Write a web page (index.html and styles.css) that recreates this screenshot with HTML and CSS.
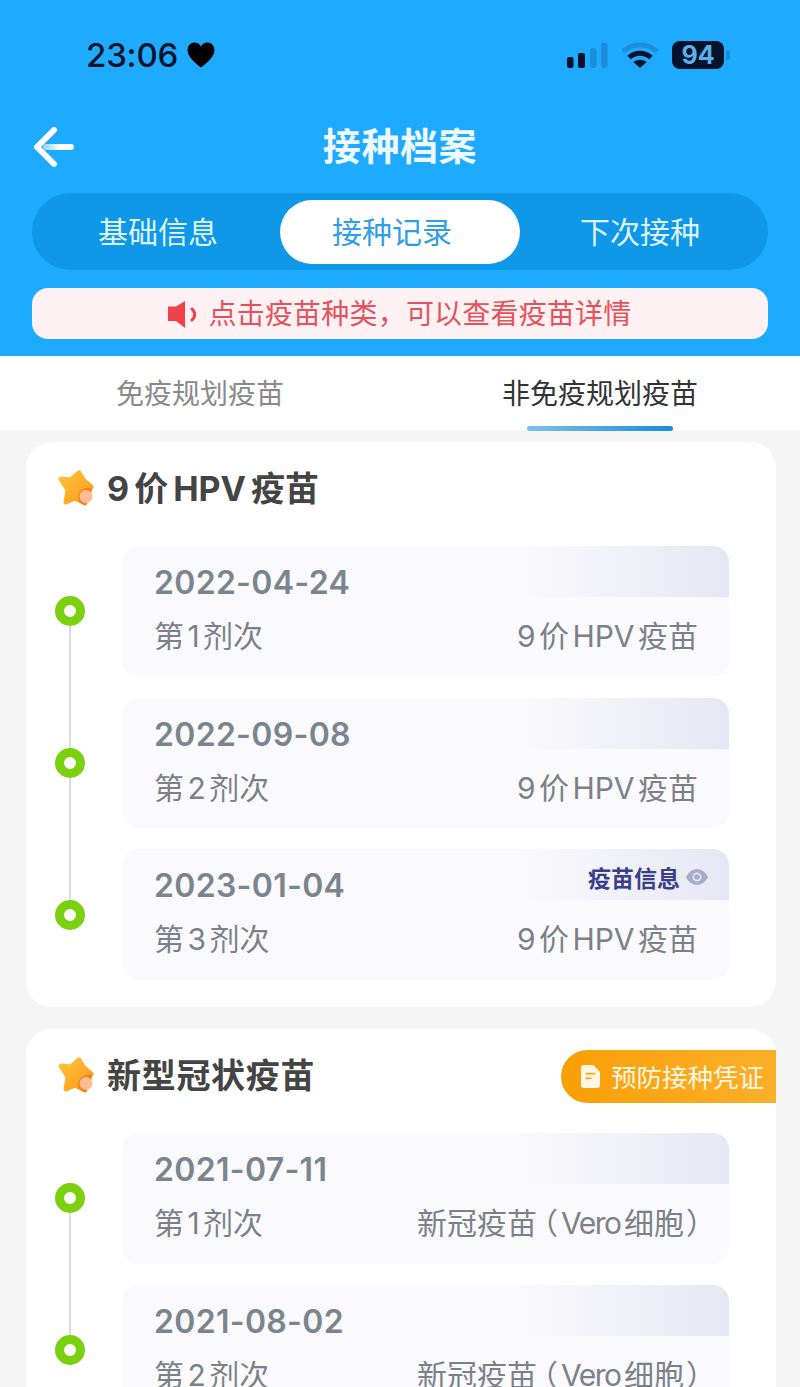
FILE: index.html
```html
<!DOCTYPE html>
<html lang="zh-CN">
<head>
<meta charset="utf-8">
<title>接种档案</title>
<link rel="stylesheet" href="styles.css">
</head>
<body>
<div class="page">
  <header class="header">
    <div class="status">
      <div class="status-left">
        <span class="time">23:06</span>
        <svg class="heart" viewBox="0 0 28 26"><path d="M14 25.500C9 21.500 1 16 .6 8.500.4 3.800 3.800.6 7.500.6c2.900 0 5.100 1.500 6.500 3.900C15.400 2.100 17.600.6 20.500.6c3.700 0 7.100 3.200 6.900 7.900C27 16 19 21.500 14 25.500z"/></svg>
      </div>
      <div class="status-right">
        <svg class="signal" viewBox="0 0 41 25"><rect x="0" y="14" width="6.500" height="11" rx="2" fill="#04122a"/><rect x="11" y="10" width="7" height="15" rx="2" fill="#04122a"/><rect x="23" y="5" width="6.500" height="20" rx="2" fill="#1a8fd8"/><rect x="34" y="0" width="6.500" height="25" rx="2" fill="#1a8fd8"/></svg>
        <svg class="wifi" viewBox="0 0 36 26"><path d="M1 9.500C10.500 .5 25.500 .5 35 9.500" fill="none" stroke="#1a8fd8" stroke-width="5"/><path d="M7 15.500c6.500-5.800 15.500-5.800 22 0" fill="none" stroke="#04122a" stroke-width="5"/><path d="M11.500 20c3.800-3 9.200-3 13 0L18 26z" fill="#04122a"/></svg>
        <div class="battery"><span class="battery-body">94</span><span class="battery-cap"></span></div>
      </div>
    </div>
    <div class="nav">
      <svg class="back" viewBox="0 0 40 40">
        <defs><linearGradient id="shaft" x1="0" x2="1" y1="0" y2="0"><stop offset="0" stop-color="#8fd2ff"/><stop offset=".55" stop-color="#fff"/></linearGradient></defs>
        <path d="M20 3 3 20l17 17" fill="none" stroke="#fff" stroke-width="6" stroke-linecap="round" stroke-linejoin="round"/>
        <rect x="9" y="17" width="31" height="6" rx="3" fill="url(#shaft)"/>
      </svg>
      <h1 class="title">接种档案</h1>
    </div>
    <div class="segments">
      <div class="segment first">基础信息</div>
      <div class="segment active">接种记录</div>
      <div class="segment">下次接种</div>
    </div>
    <div class="notice">
      <svg class="speaker" viewBox="0 0 28 28"><path d="M0 6.500h8L17 1v27L8 21H0z" fill="#ef4147"/><path d="M24 9a7 7 0 0 1 0 11" fill="none" stroke="#ef4147" stroke-width="3" stroke-linecap="round"/></svg>
      <span>点击疫苗种类，可以查看疫苗详情</span>
    </div>
  </header>

  <nav class="tabs">
    <div class="tab">免疫规划疫苗</div>
    <div class="tab current">非免疫规划疫苗</div>
  </nav>

  <main class="content">
    <section class="card">
      <div class="card-title">
        <svg class="star" viewBox="0 0 36 38">
          <defs>
            <linearGradient id="s1" x1="0" x2="1" y1="0" y2="1"><stop offset="0" stop-color="#ffc33a"/><stop offset="1" stop-color="#fb9a1b"/></linearGradient>
          </defs>
          <path d="M21 3 26 11 33 17 26 23 27 33 17 28 8 32 10 20 3 9 13 10Z" fill="url(#s1)" stroke="url(#s1)" stroke-width="5" stroke-linejoin="round"/>
          <path d="M34 18c-6-1-13 2-14 9 0 4 3 7 7 8 2-1 2-3 2-5 3-3 5-7 5-12z" fill="#f2801f"/>
          <circle cx="28" cy="26.500" r="6.500" fill="#ffbd94"/>
        </svg>
        <h2>9 价 HPV 疫苗</h2>
      </div>
      <div class="timeline">
        <div class="row"><span class="dot"></span><div class="item"><div class="band"></div><div class="date">2022-04-24</div><div class="meta"><span>第 1 剂次</span><span>9 价 HPV 疫苗</span></div></div></div>
        <div class="row"><span class="dot"></span><div class="item"><div class="band"></div><div class="date">2022-09-08</div><div class="meta"><span>第 2 剂次</span><span>9 价 HPV 疫苗</span></div></div></div>
        <div class="row"><span class="dot"></span><div class="item"><div class="band"><span class="info">疫苗信息</span><svg class="eye" viewBox="0 0 22 16"><path d="M0 8c5-10.500 17-10.500 22 0-5 10.500-17 10.500-22 0z" fill="#a9abc9"/><circle cx="11" cy="8" r="4.500" fill="#e3e4f1"/><circle cx="11" cy="8" r="2.800" fill="#a9abc9"/></svg></div><div class="date">2023-01-04</div><div class="meta"><span>第 3 剂次</span><span>9 价 HPV 疫苗</span></div></div></div>
      </div>
    </section>

    <section class="card">
      <div class="card-title">
        <svg class="star" viewBox="0 0 36 38">
          <path d="M21 3 26 11 33 17 26 23 27 33 17 28 8 32 10 20 3 9 13 10Z" fill="url(#s1)" stroke="url(#s1)" stroke-width="5" stroke-linejoin="round"/>
          <path d="M34 18c-6-1-13 2-14 9 0 4 3 7 7 8 2-1 2-3 2-5 3-3 5-7 5-12z" fill="#f2801f"/>
          <circle cx="28" cy="26.500" r="6.500" fill="#ffbd94"/>
        </svg>
        <h2 class="spaced">新型冠状疫苗</h2>
      </div>
      <div class="voucher">
        <svg class="doc" viewBox="0 0 20 24"><path d="M3 0h10l7 7v14a3 3 0 0 1-3 3H3a3 3 0 0 1-3-3V3a3 3 0 0 1 3-3z" fill="#fff6e4"/><path d="M5 9h10M5 14h6" stroke="#f9a30f" stroke-width="2" fill="none"/></svg>
        <span>预防接种凭证</span>
      </div>
      <div class="timeline">
        <div class="row"><span class="dot"></span><div class="item"><div class="band"></div><div class="date">2021-07-11</div><div class="meta"><span>第 1 剂次</span><span>新冠疫苗<span class="open">（</span><span class="latin">Vero</span> 细胞<span class="close">）</span></span></div></div></div>
        <div class="row"><span class="dot"></span><div class="item"><div class="band"></div><div class="date">2021-08-02</div><div class="meta"><span>第 2 剂次</span><span>新冠疫苗<span class="open">（</span><span class="latin">Vero</span> 细胞<span class="close">）</span></span></div></div></div>
      </div>
    </section>
  </main>
</div>
</body>
</html>
```
FILE: styles.css
```css
* { box-sizing: border-box; }
html, body { margin: 0; padding: 0; }
body {
  width: 800px;
  height: 1387px;
  overflow: hidden;
  background: #f5f5f5;
  font-family: Inter, "Noto Sans CJK SC", "Liberation Sans", sans-serif;
}
.page { width: 800px; height: 1387px; overflow: hidden; }

.header {
  height: 356px;
  background: #1eaaff;
  padding: 0 32px;
  display: flex;
  flex-direction: column;
}
.status {
  height: 110px;
  display: flex;
  justify-content: space-between;
  align-items: center;
  padding: 0 38px 0 54px;
}
.status-left { display: flex; align-items: center; gap: 9px; }
.time { font-size: 33px; font-weight: 500; color: #04122a; line-height: 1; letter-spacing: -.2px; }
.heart { width: 28px; height: 26px; fill: #000; }
.status-right { display: flex; align-items: center; gap: 14px; }
.signal { width: 41px; height: 25px; margin-top: 1px; }
.wifi { width: 36px; height: 26px; }
.battery { display: flex; align-items: center; gap: 2px; }
.battery-body {
  width: 52px;
  height: 28px;
  border-radius: 8px;
  background: #04122a;
  color: #5bb0ea;
  font-size: 25px;
  font-weight: 700;
  line-height: 28px;
  text-align: center;
}
.battery-cap { width: 4px; height: 10px; border-radius: 0 3px 3px 0; background: #1a8fd8; }

.nav {
  height: 72px;
  position: relative;
  display: flex;
  align-items: center;
  justify-content: center;
}
.back { position: absolute; left: 2px; top: 17px; width: 40px; height: 40px; }
.title {
  margin: 0;
  color: #eef8ff;
  font-size: 38px;
  font-weight: 700;
  letter-spacing: .6px;
  line-height: 1;
}

.segments {
  margin-top: 11px;
  height: 77px;
  padding: 7px 8px 6px;
  border-radius: 39px;
  background: #0f97e8;
  display: grid;
  grid-template-columns: repeat(3, 1fr);
}
.segment {
  display: flex;
  align-items: center;
  justify-content: center;
  border-radius: 32px;
  padding-bottom: 4px;
  color: #dff3ff;
  font-size: 30px;
  font-weight: 400;
}
.segment.first { padding-right: 4px; }
.segment.active { background: #fff; color: #2f9ee6; padding-right: 16px; }

.notice {
  margin-top: 18px;
  height: 51px;
  border-radius: 16px;
  background: #fef1f3;
  color: #e5525c;
  font-size: 28px;
  letter-spacing: .2px;
  display: flex;
  align-items: center;
  justify-content: center;
  gap: 12px;
}
.notice span { padding-bottom: 4px; }
.speaker { width: 28px; height: 28px; }

.tabs {
  height: 74px;
  background: #fff;
  display: grid;
  grid-template-columns: 1fr 1fr;
}
.tab {
  position: relative;
  display: flex;
  align-items: center;
  justify-content: center;
  padding-bottom: 2px;
  font-size: 28px;
  color: #8a8a8a;
}
.tab.current { color: #333; }
.tab.current::after {
  content: "";
  position: absolute;
  left: 127px;
  bottom: -1px;
  width: 146px;
  height: 5px;
  border-radius: 3px;
  background: linear-gradient(90deg, #7cc2ea, #1b8bdc);
}

.content {
  padding: 12px 24px 0 26px;
  display: flex;
  flex-direction: column;
  gap: 22px;
}
.card {
  position: relative;
  background: #fff;
  border-radius: 26px;
  padding: 0 47px 27px 29px;
}
.card-title {
  height: 94px;
  margin-bottom: 10px;
  display: flex;
  align-items: center;
  gap: 13px;
  padding-left: 3px;
}
.star { width: 36px; height: 38px; }
.card-title h2 {
  margin: 0;
  font-size: 34px;
  font-weight: 700;
  color: #444;
  line-height: 1;
  word-spacing: -3px;
}
.card-title h2.spaced { letter-spacing: .7px; }
.voucher {
  position: absolute;
  top: 21px;
  right: 0;
  width: 215px;
  height: 53px;
  border-radius: 27px 0 0 27px;
  background: linear-gradient(90deg, #f99f06, #fbb02a);
  color: #fff6e4;
  font-size: 25.500px;
  display: flex;
  align-items: center;
  gap: 11px;
  padding-left: 20px;
}
.voucher span { padding-bottom: 2px; }
.doc { width: 19px; height: 23px; }

.timeline { display: flex; flex-direction: column; gap: 21px; }
.row {
  position: relative;
  display: flex;
  align-items: center;
  gap: 37px;
}
.row:not(:last-child)::after {
  content: "";
  position: absolute;
  left: 14px;
  top: 80px;
  width: 2px;
  height: 122px;
  background: #dcdcdc;
}
.dot {
  flex: none;
  width: 30px;
  height: 30px;
  border-radius: 50%;
  border: 9px solid #7bd010;
  background: #fff;
}
.item {
  position: relative;
  flex: 1;
  height: 130.700px;
  padding: 16px 31px 0 32px;
  border-radius: 16px;
  background: #fafafc;
}
.band {
  position: absolute;
  top: 0;
  right: 0;
  width: 208px;
  height: 51px;
  padding: 5px 21px 0 0;
  border-radius: 0 16px 0 0;
  background: linear-gradient(90deg, rgba(232,233,245,0), #e6e7f4);
  display: flex;
  align-items: center;
  justify-content: flex-end;
  gap: 6px;
}
.info { font-size: 23px; font-weight: 700; color: #3a3f8c; }
.eye { width: 22px; height: 16px; }
.date {
  position: relative;
  font-size: 32px;
  font-weight: 600;
  line-height: 42px;
  color: #7a858e;
  letter-spacing: .3px;
}
.meta {
  margin-top: 10px;
  display: flex;
  justify-content: space-between;
  font-size: 30px;
  line-height: 44px;
  color: #7c8189;
  word-spacing: -5px;
  white-space: nowrap;
}
.open, .close { font-feature-settings: "halt"; }
.open { margin: 0 3px 0 6px; }
.close { margin: 0 -3px 0 2px; }
.latin { letter-spacing: -1.500px; }
```
